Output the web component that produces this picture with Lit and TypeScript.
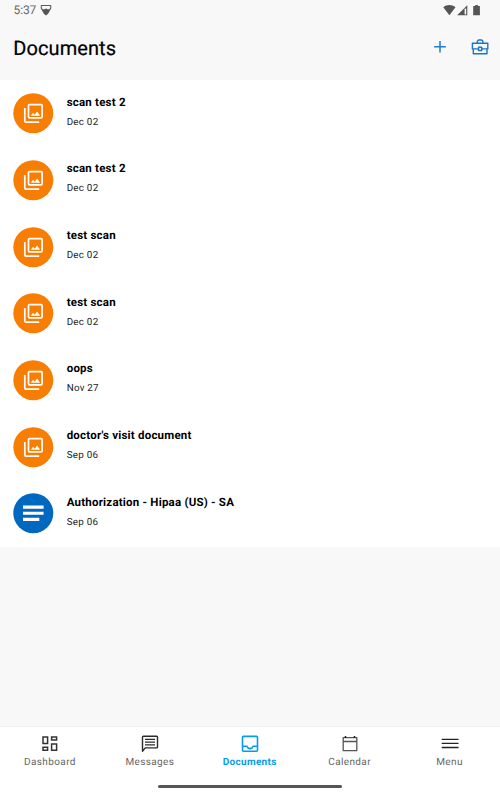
import { LitElement, html, svg, css } from "lit";
import { customElement } from "lit/decorators.js";

type Doc = { name: string; date: string; kind: "scan" | "form" };

const DOCS: Doc[] = [
  { name: "scan test 2", date: "Dec 02", kind: "scan" },
  { name: "scan test 2", date: "Dec 02", kind: "scan" },
  { name: "test scan", date: "Dec 02", kind: "scan" },
  { name: "test scan", date: "Dec 02", kind: "scan" },
  { name: "oops", date: "Nov 27", kind: "scan" },
  { name: "doctor's visit document", date: "Sep 06", kind: "scan" },
  { name: "Authorization - Hipaa (US) - SA", date: "Sep 06", kind: "form" },
];

/* Disc glyphs share a 42x42 box that also holds the coloured circle. */
const scanGlyph = svg`
  <rect x="15.5" y="11.6" width="13.6" height="13.2" rx="1" fill="none" stroke="#fff" stroke-width="1.7"/>
  <path d="M11.8 15V28a1.1 1.1 0 0 0 1.1 1.1H26.2" fill="none" stroke="#fff" stroke-width="1.7"/>
  <path d="M17.8 22.8l2.3-3 1.6 1.9 2.4-3.1 3 4.2z" fill="#fff"/>`;

const formGlyph = svg`
  <path d="M10 12.6h20.6v3.1H10zM10 18.7h20.6v3.1H10zM10 24.8h16.3v3.1H10z" fill="#fff"/>`;

/* Tab glyphs share a 20x20 box. */
const TABS = [
  { label: "Dashboard", icon: svg`<path d="M3 2.9h4.6v6.5H3zM11.6 2.9h5v3h-5zM11.6 9.9h5v6.4h-5zM3 13.3h4.6v3H3z" fill="none" stroke="#333" stroke-width="1.5"/>` },
  { label: "Messages", icon: svg`<path d="M2.5 17.2V3.1a.8.8 0 0 1 .8-.8h13.4a.8.8 0 0 1 .8.8v10a.8.8 0 0 1-.8.8H5.2z" fill="none" stroke="#2b2b2b" stroke-width="1.4" stroke-linejoin="round"/><path d="M5 5.4h10M5 8.1h10M5 10.8h10" stroke="#2b2b2b" stroke-width="1.3"/>` },
  { label: "Documents", active: true, icon: svg`<rect x="2.5" y="2.4" width="15" height="14.9" rx="1" fill="none" stroke="#049cec" stroke-width="1.6"/><path d="M2.5 12.3h4.3c.6 1.5 1.7 2.3 3.2 2.3s2.6-.8 3.2-2.3h4.3" fill="none" stroke="#049cec" stroke-width="1.6"/>` },
  { label: "Calendar", icon: svg`<path d="M3.2 3.7h13.6v13H3.2zM3.2 7.5h13.6" fill="none" stroke="#555" stroke-width="1.3" stroke-linejoin="round"/><path d="M5.5 2.1v1.8M14.5 2.1v1.8" stroke="#222" stroke-width="1.5"/>` },
  { label: "Menu", icon: svg`<path d="M1.7 5.4h16.8M1.7 9.4h16.8M1.7 13.5h16.8" stroke="#222" stroke-width="1.3"/>` },
];

@customElement("app-root")
export class AppRoot extends LitElement {
  static styles = css`
    :host { display: flex; flex-direction: column; width: 500px; height: 800px; background: #f8f8f8; font-family: Roboto, sans-serif; color: #000; overflow: hidden; text-rendering: geometricPrecision; }
    svg { display: block; flex: none; }
    .status { display: flex; align-items: center; height: 20px; padding: 0 18px 0 13.5px; color: #666; font-size: 12px; }
    .time { width: 22px; letter-spacing: -.1px; white-space: nowrap; }
    .shield { margin-left: 4px; }
    .signals { margin-left: auto; }
    .bar { display: flex; align-items: center; height: 60px; padding: 0 10px 4px 13.3px; box-sizing: border-box; }
    .title { flex: 1; margin: 0; font-size: 20px; line-height: 24px; font-weight: 400; letter-spacing: .08px; -webkit-text-stroke: .2px #000; }
    .actions { display: flex; align-items: center; gap: 20px; padding-bottom: 3px; }
    .list { margin: 0; padding: 0; list-style: none; background: #fff; }
    .row { display: flex; align-items: center; gap: 11.7px; height: 66.67px; padding-left: 13px; }
    .disc { width: 42px; height: 42px; }
    .scan { fill: #f87d03; }
    .form { fill: #0168bf; }
    .text { padding-bottom: 2px; }
    .name { font-size: 11.5px; line-height: 16px; font-weight: 700; letter-spacing: .21px; }
    .date { margin-top: 5px; font-size: 9.8px; line-height: 16px; letter-spacing: .25px; color: #222; }
    .bottom { margin-top: auto; height: 74px; box-sizing: border-box; border-top: 1px solid #f0f0f0; background: #fff; display: flex; flex-direction: column; }
    .tabs { display: grid; grid-template-columns: repeat(5, 99.9px); padding-top: 7px; }
    .tab { display: flex; flex-direction: column; align-items: center; font-size: 10px; line-height: 15px; letter-spacing: .38px; color: #666; gap: 1px; }
    .active { color: #049cec; font-weight: 700; letter-spacing: .3px; }
    .handle { align-self: center; width: 184px; height: 3px; margin-top: 15px; border-radius: 2px; background: #555; }
  `;

  render() {
    return html`
      <div class="status">
        <span class="time">5:37</span>
        <svg class="shield" width="12" height="12" viewBox="0 0 12 12"><path d="M1.3 1.5h9.4v2.6L7.5 9.6 6 10.8 4.5 9.6 1.3 4.1z" fill="none" stroke="#5b5b5b" stroke-width="1.1" stroke-linejoin="round"/><path d="M2.2 5.2h2.2L6 4.4l1.6.8h2.2L7.6 9.6 6 11 4.4 9.6z" fill="#555"/></svg>
        <svg class="signals" width="40" height="14" viewBox="0 0 40 14">
          <path d="M1.3 4.3C4.7 1.3 9.7 1.3 13.5 4.3L7.4 12.2z" fill="#555"/>
          <path d="M25.3 2.2v10H15.1z" fill="#555"/><path d="M22.6 5.6h1.6v5.8h-1.6z" fill="#f8f8f8"/>
          <path d="M33.3 2h2.6v1.1h2v9.2h-6.7V3.1h2.1z" fill="#555"/>
        </svg>
      </div>
      <header class="bar">
        <h1 class="title">Documents</h1>
        <div class="actions">
          <svg width="20" height="20" viewBox="0 0 20 20"><path d="M4.2 9.8h11.6M10 4v11.6" stroke="#1c7cd0" stroke-width="1.5"/></svg>
          <svg width="20" height="20" viewBox="0 0 20 20"><g fill="none" stroke="#1976c8" stroke-width="1.4" stroke-linejoin="round"><path d="M2.4 6.3h15.4v5.6H2.4zM3.3 11.9v4.9H17v-4.9M7.3 6.1V4.2L8.5 3h3.2l1.2 1.2v1.9"/><rect x="8.5" y="10.3" width="3.2" height="3.2" fill="#f8f8f8"/></g></svg>
        </div>
      </header>
      <ul class="list">
        ${DOCS.map((d) => html`
          <li class="row">
            <svg class="disc" viewBox="0 0 42 42"><circle class=${d.kind} cx="20.3" cy="21.2" r="20"/><g transform="translate(0 1)">${d.kind === "scan" ? scanGlyph : formGlyph}</g></svg>
            <div class="text"><div class="name">${d.name}</div><div class="date">${d.date}</div></div>
          </li>`)}
      </ul>
      <div class="bottom">
        <nav class="tabs">
          ${TABS.map((t) => html`
            <div class="tab ${t.active ? "active" : ""}">
              <svg width="20" height="20" viewBox="0 0 20 20">${t.icon}</svg><span>${t.label}</span>
            </div>`)}
        </nav>
        <div class="handle"></div>
      </div>`;
  }
}
